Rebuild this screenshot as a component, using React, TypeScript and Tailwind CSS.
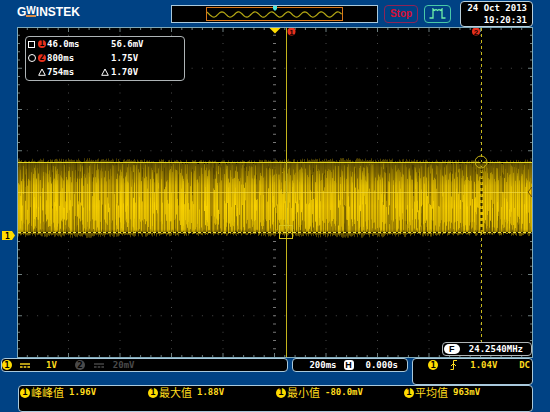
import React from "react";

const WIDTH = 516;
const HEIGHT = 331;
const COL = 51.5;
const ROW = 41.25;

interface BadgeProps {
  label: string;
  className: string;
}

interface Segment {
  x: number;
  y1: number;
  y2: number;
  color: string;
  opacity: number;
}

interface Measurement {
  name: string;
  value: string;
}

const MEASUREMENTS: Measurement[] = [
  { name: "峰峰值", value: "1.96V" },
  { name: "最大值", value: "1.88V" },
  { name: "最小值", value: "-80.0mV" },
  { name: "平均值", value: "963mV" },
];

// Small seeded generator so the trace is the same on every render
function createRandom(seed: number) {
  let state = seed;
  return () => {
    state = (state * 1664525 + 1013904223) % 4294967296;
    return state / 4294967296;
  };
}

function buildTrace(): Segment[] {
  const random = createRandom(2013);
  const colors = ["#a88800", "#c8a400", "#dab300", "#e8c000", "#f5cc00"];
  const segments: Segment[] = [];
  for (let x = 1; x < WIDTH - 1; x++) {
    const swell = Math.sin(x / 42) * 1;
    segments.push({
      x,
      y1: 132 + random() * 4 - swell,
      y2: 206 + random() * 4 + swell,
      color: "#b39200",
      opacity: 0.8 + random() * 0.2,
    });
    segments.push({
      x,
      y1: 136 + random() * 20,
      y2: 192 + random() * 15,
      color: colors[Math.floor(random() * colors.length)],
      opacity: 0.9,
    });
    if (random() > 0.45) {
      const y = 138 + random() * 45;
      segments.push({
        x,
        y1: y,
        y2: Math.min(y + 20 + random() * 45, 207),
        color: "#ffd800",
        opacity: 0.65,
      });
    }
    if (random() > 0.8) {
      const y = random() > 0.5 ? 136 + random() * 12 : 176 + random() * 18;
      segments.push({
        x,
        y1: y,
        y2: Math.min(y + 14 + random() * 24, 208),
        color: "#4a3b00",
        opacity: 0.5,
      });
    }
  }
  return segments;
}

const TRACE = buildTrace();

const Badge: React.FC<BadgeProps> = ({ label, className }) => {
  return (
    <span
      className={`inline-flex shrink-0 items-center justify-center rounded-full font-bold ${className}`}
    >
      {label}
    </span>
  );
};

const Coupling: React.FC = () => {
  return (
    <svg viewBox="0 0 10 5" className="h-[5px] w-[10px] shrink-0" fill="none" stroke="currentColor">
      <path d="M0 1H10" strokeWidth="1.4" />
      <path d="M0 4H10" strokeWidth="1.4" strokeDasharray="2.6 1.1" />
    </svg>
  );
};

const Delta: React.FC = () => {
  return (
    <svg viewBox="0 0 8 8" className="size-2" fill="none" stroke="currentColor">
      <path d="M4 1L7.3 7.3H0.7Z" />
    </svg>
  );
};

const Preview: React.FC = () => {
  let wave = "M0 4";
  for (let x = 1; x <= 135; x++) {
    wave += `L${x} ${(6.5 - Math.cos(((x - 15) / 16.6) * Math.PI * 2) * 2.6).toFixed(2)}`;
  }
  return (
    <div className="relative flex h-[18px] flex-1 items-center justify-center border border-[#a9c9dc] bg-black">
      <div className="h-[14px] w-2/3 border border-[#d9771c]">
        <svg viewBox="0 0 135 12" preserveAspectRatio="none" className="block h-full w-full" fill="none">
          <path d={wave} stroke="#b5a814" strokeWidth="1.2" />
        </svg>
      </div>
      <svg viewBox="0 0 4 5" className="absolute top-0 left-1/2 h-[5px] w-1 -translate-x-1/2">
        <path d="M0 0H4V3L2 5L0 3Z" fill="#4be6e0" />
      </svg>
    </div>
  );
};

const Header: React.FC = () => {
  return (
    <header className="flex h-[27px] items-center pr-[17px] pl-[17px]">
      <div className="mb-1 flex w-[154px] items-start font-['Liberation_Sans'] text-[12px] leading-[12px] font-bold text-white">
        <span>G</span>
        <span className="h-[11px] border-b-2 border-[#d98b45] text-[10px] leading-[10px]">W</span>
        <span>INSTEK</span>
      </div>
      <Preview />
      <button className="ml-[6px] h-[18px] w-[34px] rounded-[4px] border border-[#8d2457] font-['Liberation_Sans'] text-[10px] leading-[10px] font-bold text-[#d90f35]">
        Stop
      </button>
      <button
        aria-label="Acquire"
        className="ml-[6px] flex h-[18px] w-[27px] items-center justify-center rounded-[4px] border border-[#48c9a8]"
      >
        <svg viewBox="0 0 17 11" className="h-[11px] w-[17px]" fill="none" stroke="#6df0a8">
          <path d="M0.5 10H4V1L5.5 2.5L7 1.5L8.5 2.5L10 1.5L11.5 2.5L13 1V10H16.5" strokeWidth="1.3" />
        </svg>
      </button>
      <div className="ml-[9px] h-[26px] w-[73px] rounded-[4px] border border-[#b9d0de] bg-black pr-[5px] text-right leading-[12px] whitespace-nowrap text-white">
        <div>24 Oct 2013</div>
        <div>19:20:31</div>
      </div>
    </header>
  );
};

const Graticule: React.FC = () => {
  const dots: React.ReactNode[] = [];
  // Dotted division lines, five ticks per division
  for (let r = 1; r < 8; r++) {
    for (let i = 1; i < 50; i++) {
      const mid = r === 4;
      dots.push(
        <path
          key={`r${r}-${i}`}
          d={`M${i * (COL / 5)} ${r * ROW - (mid ? 2 : 0.5)}v${mid ? 4 : 1}`}
          stroke={mid ? "#777" : "#4a4a4a"}
        />
      );
    }
  }
  for (let c = 1; c < 10; c++) {
    for (let i = 1; i < 40; i++) {
      const mid = c === 5;
      dots.push(
        <path
          key={`c${c}-${i}`}
          d={`M${c * COL - (mid ? 1.5 : 0.5)} ${i * (ROW / 5)}h${mid ? 3 : 1}`}
          stroke={mid ? "#777" : "#4a4a4a"}
        />
      );
    }
  }
  for (let i = 1; i < 50; i++) {
    const len = i % 5 === 0 ? 4 : 2;
    dots.push(
      <path key={`x${i}`} d={`M${i * (COL / 5)} 1v${len}M${i * (COL / 5)} 330v${-len}`} stroke="#6f7f80" />
    );
  }
  for (let i = 1; i < 40; i++) {
    const len = i % 5 === 0 ? 4 : 2;
    dots.push(
      <path key={`y${i}`} d={`M1 ${i * (ROW / 5)}h${len}M515 ${i * (ROW / 5)}h${-len}`} stroke="#6f7f80" />
    );
  }
  return <g>{dots}</g>;
};

const Plot: React.FC = () => {
  return (
    <svg viewBox={`0 0 ${WIDTH} ${HEIGHT}`} className="block w-full bg-black" fill="none">
      <defs>
        <linearGradient id="shade" x1="0" y1="0" x2="0" y2="1">
          <stop offset="0" stopColor="#000" stopOpacity="0.6" />
          <stop offset="0.12" stopColor="#000" stopOpacity="0.35" />
          <stop offset="0.35" stopColor="#000" stopOpacity="0.08" />
          <stop offset="0.6" stopColor="#000" stopOpacity="0" />
          <stop offset="0.88" stopColor="#000" stopOpacity="0.06" />
          <stop offset="1" stopColor="#000" stopOpacity="0.7" />
        </linearGradient>
      </defs>
      <Graticule />

      {/* Channel 1 trace */}
      {TRACE.map((s, i) => (
        <path
          key={i}
          d={`M${s.x + 0.5} ${s.y1.toFixed(1)}V${s.y2.toFixed(1)}`}
          stroke={s.color}
          strokeOpacity={s.opacity}
        />
      ))}
      <rect x="1" y="130" width="514" height="82" fill="url(#shade)" />

      {/* Cursors */}
      <path d="M1 135.5H515" stroke="#e8dc20" />
      <path d="M1 165.5H515" stroke="#f4dc40" strokeOpacity="0.7" />
      <path d="M1 205.5H515" stroke="#1a1500" />
      <path d="M1 205.5H515" stroke="#f0e23c" strokeDasharray="3 2" />
      <path d="M269.5 1V330" stroke="#c4b41c" />
      <path d="M464.5 1V330" stroke="#c8b81c" strokeDasharray="3 3" />
      <path d="M464.5 135V206" stroke="#2a2200" strokeWidth="2" strokeDasharray="3 3" strokeDashoffset="1" />
      <rect x="262.5" y="198.5" width="13" height="13" stroke="#d8c41c" />
      <circle cx="464" cy="135" r="6" stroke="#c9b416" />
      <path d="M515 160L511 165L515 170Z" fill="#f4c400" stroke="#6b4c00" />

      <path d="M252.5 1H263.5L258 6.5Z" fill="#ffdc00" />
      <circle cx="274.5" cy="4.5" r="4" fill="#e8301c" />
      <circle cx="459" cy="4.5" r="4" fill="#e8301c" />
      <g fill="#200" fontSize="8" fontWeight="bold" textAnchor="middle" fontFamily="Liberation Sans, sans-serif">
        <text x="274.5" y="7.5">1</text>
        <text x="459" y="7.5">2</text>
      </g>
      <rect x="0.5" y="0.5" width="515" height="330" stroke="#7fa9b8" />
    </svg>
  );
};

const CursorReadout: React.FC = () => {
  return (
    <div className="absolute top-[9px] left-2 grid w-[160px] grid-cols-[10px_9px_54px_10px_auto] items-center rounded-[4px] border border-[#aeb4b6] bg-black pb-px pl-[2px] leading-[14px] whitespace-nowrap text-white">
      <span className="size-[7px] border border-white" />
      <Badge label="1" className="size-2 bg-[#e8301c] text-[8px] leading-[8px] text-black" />
      <span>46.0ms</span>
      <span />
      <span>56.6mV</span>
      <span className="size-2 rounded-full border border-white" />
      <Badge label="2" className="size-2 bg-[#e8301c] text-[8px] leading-[8px] text-black" />
      <span>800ms</span>
      <span />
      <span>1.75V</span>
      <span />
      <Delta />
      <span>754ms</span>
      <Delta />
      <span>1.70V</span>
    </div>
  );
};

const FrequencyCounter: React.FC = () => {
  return (
    <div className="absolute right-px bottom-[2px] flex h-[14px] items-center gap-[9px] rounded-[4px] border border-[#aeb4b6] bg-black pr-2 pl-px leading-[12px] text-white">
      <Badge
        label="F"
        className="h-[10px] w-4 bg-white font-['Liberation_Sans'] text-[9px] leading-[9px] text-black"
      />
      24.2540MHz
    </div>
  );
};

const StatusBar: React.FC = () => {
  return (
    <div className="grid grid-cols-[288fr_116fr_121fr] items-start gap-x-[4px] pr-[17px] pl-px leading-[12px] whitespace-nowrap">
      <div className="flex h-[14px] items-center rounded-[4px] border border-[#a9c9dc] bg-black text-[#ffdc1e]">
        <Badge label="1" className="size-[10px] bg-[#ffdc00] text-[9px] leading-[9px] text-black" />
        <span className="ml-2">
          <Coupling />
        </span>
        <span className="ml-4">1V</span>
        <div className="ml-[18px] flex items-center gap-[9px] text-[#4a4a4a]">
          <Badge label="2" className="size-[10px] bg-[#4a4a4a] text-[9px] leading-[9px] text-black" />
          <Coupling />
          <span>20mV</span>
        </div>
      </div>
      <div className="flex h-[14px] items-center rounded-[4px] border border-[#a9c9dc] bg-black pl-4 text-white">
        <span>200ms</span>
        <span className="ml-[7px] flex h-[10px] w-[10px] items-center justify-center rounded-[3px] bg-white font-['Liberation_Sans'] text-[9px] leading-[9px] text-black">
          H
        </span>
        <span className="ml-3">0.000s</span>
      </div>
      <div className="flex h-[27px] items-start rounded-[4px] border border-[#a9c9dc] bg-black pr-[2px] pl-[15px] text-[#ffdc1e]">
        <Badge label="1" className="mt-px size-[10px] bg-[#ffdc00] text-[9px] leading-[9px] text-black" />
        <svg viewBox="0 0 8 10" className="mt-px ml-3 h-[10px] w-2" fill="none" stroke="currentColor">
          <path d="M0.5 9.5H3.5V0.5H7M1 6L3.5 3.5L6 6" />
        </svg>
        <span className="ml-3">1.04V</span>
        <span className="ml-auto">DC</span>
      </div>
    </div>
  );
};

const MeasurementBar: React.FC = () => {
  return (
    <div className="mr-[17px] ml-[18px] grid h-[27px] grid-cols-4 rounded-[4px] border border-[#a9c9dc] bg-black pl-px leading-[13px] whitespace-nowrap text-[#ffdc1e]">
      {MEASUREMENTS.map((m) => (
        <div key={m.name} className="flex h-[13px] items-center">
          <Badge label="1" className="size-[10px] bg-[#ffdc00] text-[9px] leading-[9px] text-black" />
          <span className="ml-px font-['Noto_Sans_CJK_SC',sans-serif] text-[11px] font-normal">{m.name}</span>
          <span className="ml-[5px]">{m.value}</span>
        </div>
      ))}
    </div>
  );
};

const App: React.FC = () => {
  return (
    <div className="min-h-screen w-full bg-[#004284] font-['DejaVu_Sans_Mono','Liberation_Mono',monospace] text-[9px] font-bold">
      <Header />
      <main className="relative mx-[17px]">
        <Plot />
        <CursorReadout />
        <FrequencyCounter />
        <svg viewBox="0 0 13 9" className="absolute top-[61.5%] -left-[15px] h-[9px] w-[13px]">
          <path d="M0 0H10L13 4.5L10 9H0Z" fill="#ffdc00" />
          <text x="5.5" y="7.5" fontSize="8" textAnchor="middle" fill="#000">
            1
          </text>
        </svg>
      </main>
      <StatusBar />
      <MeasurementBar />
    </div>
  );
};

export default App;
